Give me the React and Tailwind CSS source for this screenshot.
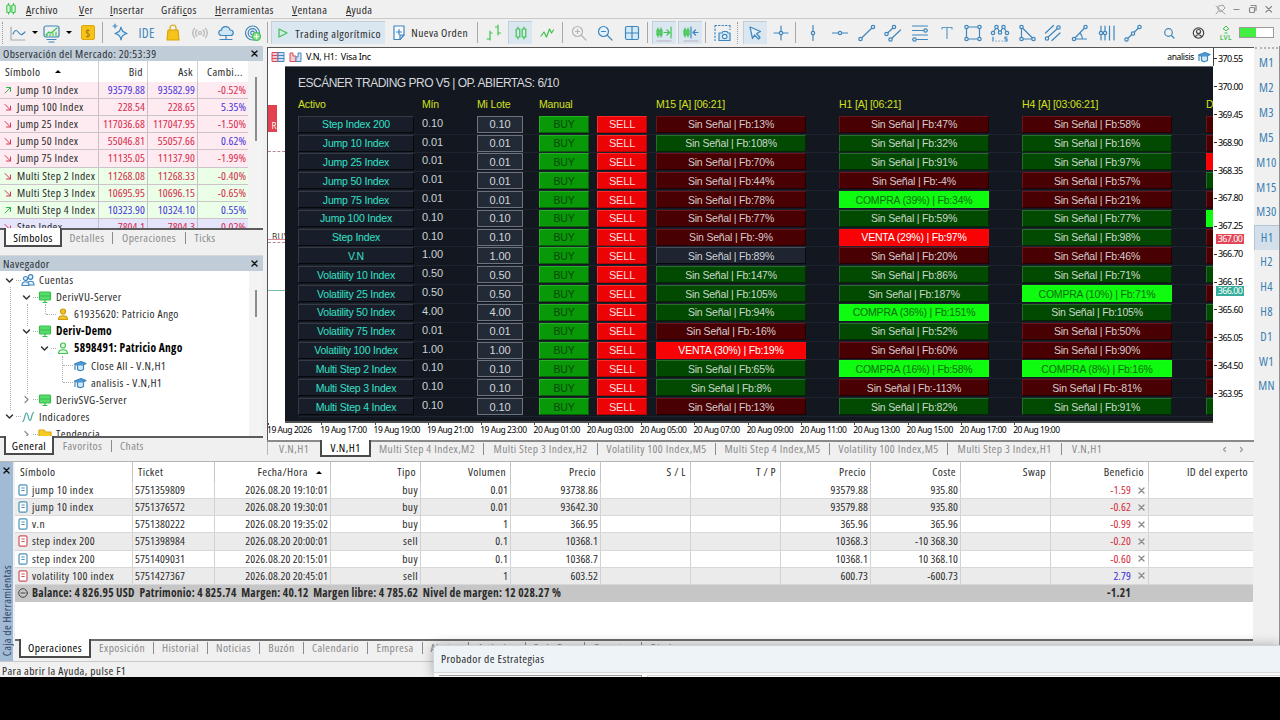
import clsx from "clsx";

const BLUE = "#3f86bd";
const GREEN = "#3fc34f";

const MENU = [
    { label: "Archivo", width: "w-[53px]" },
    { label: "Ver", width: "w-[31px]" },
    { label: "Insertar", width: "w-[51px]" },
    { label: "Gráficos", width: "w-[54px]", key: 5 },
    { label: "Herramientas", width: "w-[77px]" },
    { label: "Ventana", width: "w-[54px]" },
    { label: "Ayuda", width: "w-[40px]" },
];

const QUOTES = [
    { name: "Jump 10 Index", bid: "93579.88", ask: "93582.99", change: "-0.52%", up: true, tone: "pink" },
    { name: "Jump 100 Index", bid: "228.54", ask: "228.65", change: "5.35%", up: false, tone: "pink" },
    { name: "Jump 25 Index", bid: "117036.68", ask: "117047.95", change: "-1.50%", up: false, tone: "pink" },
    { name: "Jump 50 Index", bid: "55046.81", ask: "55057.66", change: "0.62%", up: false, tone: "pink" },
    { name: "Jump 75 Index", bid: "11135.05", ask: "11137.90", change: "-1.99%", up: false, tone: "pink" },
    { name: "Multi Step 2 Index", bid: "11268.08", ask: "11268.33", change: "-0.40%", up: false, tone: "green" },
    { name: "Multi Step 3 Index", bid: "10695.95", ask: "10696.15", change: "-0.65%", up: false, tone: "green" },
    { name: "Multi Step 4 Index", bid: "10323.90", ask: "10324.10", change: "0.55%", up: true, tone: "green" },
    { name: "Step Index", bid: "7804.1", ask: "7804.3", change: "-0.02%", up: false, tone: "violet" },
];

const TONES = {
    pink: "bg-[#feebf1]",
    green: "bg-[#eafee8]",
    violet: "bg-[#e4e4fb]",
};

// signal kinds: r = bearish, g = bullish, n = neutral, B = buy alert, S = sell alert
const SCANNER = [
    ["Step Index 200", "0.10", "r13", "r47", "r58", "r"],
    ["Jump 10 Index", "0.01", "g108", "g32", "g16", "r"],
    ["Jump 25 Index", "0.01", "r70", "g91", "g97", "S"],
    ["Jump 50 Index", "0.01", "r44", "r-4", "r57", "g"],
    ["Jump 75 Index", "0.01", "r78", "B34:39", "r21", "r"],
    ["Jump 100 Index", "0.10", "r77", "g59", "g77", "B"],
    ["Step Index", "0.10", "r-9", "S97:29", "g98", "r"],
    ["V.N", "1.00", "n89", "r20", "r46", "r"],
    ["Volatility 10 Index", "0.50", "g147", "g86", "g71", "g"],
    ["Volatility 25 Index", "0.50", "g105", "g187", "B71:10", "r"],
    ["Volatility 50 Index", "4.00", "g94", "B151:36", "g105", "g"],
    ["Volatility 75 Index", "0.01", "r-16", "g52", "r50", "r"],
    ["Volatility 100 Index", "1.00", "S19:30", "r60", "r90", "r"],
    ["Multi Step 2 Index", "0.10", "g65", "B58:16", "B16:8", "r"],
    ["Multi Step 3 Index", "0.10", "g8", "r-113", "r-81", "r"],
    ["Multi Step 4 Index", "0.10", "r13", "g82", "g91", "g"],
];

const SIGNALS = {
    r: "bg-[#480003] border-t-[#6a1419] border-l-[#6a1419] border-b-[#230003] border-r-[#230003] text-[#d6cccd]",
    g: "bg-[#024a02] border-t-[#24702a] border-l-[#24702a] border-b-[#012801] border-r-[#012801] text-[#cbd8cb]",
    n: "bg-[#1e2430] border-t-[#454c58] border-l-[#454c58] border-b-[#07090e] border-r-[#07090e] text-[#cfd2d8]",
    B: "bg-[#0ffb0f] border-[#12fe12] text-[#0b6d0b]",
    S: "bg-[#f70205] border-[#fb0609] text-white",
};

const PRICES = ["370.55", "370.00", "369.45", "368.90", "368.35", "367.80", "367.25", "366.70", "366.15", "365.60", "365.05", "364.50", "363.95"];

const DATES = [
    "19 Aug 2026", "19 Aug 17:00", "19 Aug 19:00", "19 Aug 21:00", "19 Aug 23:00",
    "20 Aug 01:00", "20 Aug 03:00", "20 Aug 05:00", "20 Aug 07:00", "20 Aug 09:00",
    "20 Aug 11:00", "20 Aug 13:00", "20 Aug 15:00", "20 Aug 17:00", "20 Aug 19:00",
];

const FRAMES = ["M1", "M2", "M3", "M5", "M10", "M15", "M30", "H1", "H2", "H4", "H8", "D1", "W1", "MN"];

const CHART_TABS = [
    { label: "Multi Step 4 Index,M2", width: "w-[113px]" },
    { label: "Multi Step 3 Index,H2", width: "w-[114px]" },
    { label: "Volatility 100 Index,M5", width: "w-[118px]" },
    { label: "Multi Step 4 Index,M5", width: "w-[114px]" },
    { label: "Volatility 100 Index,M5", width: "w-[118px]" },
    { label: "Multi Step 3 Index,H1", width: "w-[114px]" },
    { label: "V.N,H1", width: "w-[50px]", last: true },
];

const BOTTOM_TABS = [
    { label: "Exposición", width: "w-[63px]" },
    { label: "Historial", width: "w-[54px]" },
    { label: "Noticias", width: "w-[52px]" },
    { label: "Buzón", width: "w-[44px]" },
    { label: "Calendario", width: "w-[64px]" },
    { label: "Empresa", width: "w-[55px]" },
    { label: "Alertas", width: "w-[46px]" },
    { label: "Artículos", width: "w-[57px]" },
    { label: "Code Base", width: "w-[59px]" },
    { label: "Expertos", width: "w-[57px]" },
    { label: "Diario", width: "w-[44px]", last: true },
];

const TRADES = [
    ["jump 10 index", "5751359809", "2026.08.20 19:10:01", "buy", "0.01", "93738.86", "93579.88", "935.80", "-1.59"],
    ["jump 10 index", "5751376572", "2026.08.20 19:30:01", "buy", "0.01", "93642.30", "93579.88", "935.80", "-0.62"],
    ["v.n", "5751380222", "2026.08.20 19:35:02", "buy", "1", "366.95", "365.96", "365.96", "-0.99"],
    ["step index 200", "5751398984", "2026.08.20 20:00:01", "sell", "0.1", "10368.1", "10368.3", "-10 368.30", "-0.20"],
    ["step index 200", "5751409031", "2026.08.20 20:15:01", "buy", "0.1", "10368.7", "10368.1", "10 368.10", "-0.60"],
    ["volatility 100 index", "5751427367", "2026.08.20 20:45:01", "sell", "1", "603.52", "600.73", "-600.73", "2.79"],
];

const TRADE_GRID = "grid grid-cols-[118px_82px_116px_90px_90px_90px_90px_90px_90px_90px_90px_98px_104px]";

function Icon({ children, color = BLUE, size = 24 }) {
    return (
        <svg
            width={size}
            height={size}
            viewBox={`0 0 ${size} ${size}`}
            fill="none"
            stroke={color}
            strokeWidth="1.2"
            strokeLinecap="round"
            strokeLinejoin="round"
            className="shrink-0"
        >
            {children}
        </svg>
    );
}

function Tool({ children, active, color }) {
    return (
        <div className="flex h-full w-[26.67px] shrink-0 items-center justify-center">
            <div className={clsx("flex h-[23px] w-[24px] items-center justify-center", active && "border-t border-l border-[#c2cfd9] bg-[#dae6f0]")}>
                <Icon color={color}>{children}</Icon>
            </div>
        </div>
    );
}

function Dot({ x, y }) {
    return <circle cx={x} cy={y} r="1.7" fill="#f0f0f0" />;
}

function Sep() {
    return <div className="h-[21px] w-px shrink-0 bg-[#a8a8a8]" />;
}

function Caret() {
    return (
        <div className="flex w-[10px] justify-center">
            <div className="border-x-3 border-t-3 border-x-transparent border-t-black" />
        </div>
    );
}

function Grip() {
    return <div className="h-[22px] border-l border-dotted border-[#9a9a9a]" />;
}

function MenuBar() {
    return (
        <div className="flex h-[19px] items-center border-b border-[#c9c9c9]">
            <div className="w-[26px]">
                <svg width="22" height="14" viewBox="0 0 22 14" fill="#d9f5dc" stroke={GREEN} strokeWidth="1.1">
                    <path d="M8.5 1v11.5M13.5 1v11.5" />
                    <rect x="6.8" y="3" width="3.4" height="7.5" rx="1" />
                    <rect x="11.8" y="3" width="3.4" height="7.5" rx="1" />
                </svg>
            </div>
            {MENU.map(({ label, width, key = 0 }) => (
                <div key={label} className={clsx("pt-px whitespace-nowrap", width)}>
                    {label.slice(0, key)}
                    <u className="decoration-1 underline-offset-1">{label[key]}</u>
                    {label.slice(key + 1)}
                </div>
            ))}
            <div className="mr-1 ml-auto flex gap-[1px]">
                <Icon size={15} color="#a0a0a0">
                    <path d="M3 4l9 8M5.500 9L3 12M6 4l4-1 2 3-2 2-3 2-2-3z" strokeWidth="1" />
                </Icon>
                <Icon size={15} color="#8a8a8a"><path d="M5 7.500h5" /></Icon>
                <Icon size={15} color="#8a8a8a">
                    <rect x="4.500" y="5.500" width="5" height="5" rx="1" />
                    <path d="M6 3.500h5v5" />
                </Icon>
                <Icon size={15} color="#8a8a8a"><path d="M5 4.500l5.500 5.500M10.500 4.500L5 10" /></Icon>
            </div>
        </div>
    );
}

function Toolbar() {
    return (
        <div className="flex h-[27px] items-center *:shrink-0">
            <div className="w-[6px] pl-[2px]"><Grip /></div>
            <Icon>
                <path d="M5 6v13h14" stroke="#aaa" />
                <path d="M7 13c2-5 4-4 6-1s4 1 6-1" />
            </Icon>
            <Caret />
            <Icon>
                <rect x="4" y="5" width="15" height="11" rx="2" />
                <path d="M7 18.500h9M9 21h5" />
                <path d="M6 14l3-3 2 1 6-5M7 15v-1M10 15v-2M13 15v-3M16 15v-4" stroke={GREEN} />
            </Icon>
            <Caret />
            <div className="flex w-[28px] justify-center">
                <div className="flex h-[15px] w-[14px] items-center justify-center rounded-[2px] border border-[#dfa60c] bg-[#f7c31a] text-[11px] font-semibold text-[#a87908]">$</div>
            </div>
            <Sep />
            <div className="w-[4px]" />
            <Tool>
                <path d="M13 6c.8 4 2 5.200 6 6.500-4 1.200-5.200 2.500-6 6.500-.8-4-2-5.300-6-6.500 4-1.300 5.200-2.500 6-6.500z" fill="#d9ebf8" />
                <path d="M7 3v4M5 5h4" />
            </Tool>
            <div className="w-[26px] text-center text-[13.5px] text-[#3f86bd]">IDE</div>
            <Tool color="#d9a40b">
                <path d="M9 10V7c0-4 6-4 6 0v3" />
                <path d="M7 9h10l1 10H6z" fill="#f7c31a" />
            </Tool>
            <Tool color="#b5b5b5">
                <circle cx="12" cy="12" r="1.500" />
                <path d="M9 9c-2 2-2 4 0 6M15 9c2 2 2 4 0 6M6.500 7.500c-2.500 3-2.500 6 0 9M17.500 7.500c2.500 3 2.500 6 0 9" />
            </Tool>
            <Tool>
                <path d="M8 14.500c-4 0-4.500-5-.5-5.300C8 4.500 15 4.500 16 9c4.500 0 4 5.500.5 5.500z" fill="#cfe6f7" />
                <path d="M12 14.500v4M6 18.500h12" />
            </Tool>
            <Tool>
                <circle cx="11.500" cy="12" r="7" />
                <circle cx="11.500" cy="12" r="4.300" />
                <circle cx="11.500" cy="12" r="1.800" />
                <circle cx="15.500" cy="15.500" r="4" fill="#8ce08c" stroke={GREEN} />
                <path d="M15.500 13.700v3.600M13.700 15.500h3.600" stroke="#fff" />
            </Tool>
            <div className="w-[1px]" />
            <Sep />
            <div className="ml-[3px] flex h-[23px] w-[114px] items-center border-t border-l border-[#c2cfd9] bg-[#dae6f0]">
                <Icon size={22} color={GREEN}><path d="M7 7l8 4-8 4z" /></Icon>
                <span className="ml-px pt-px tracking-[0.5px] whitespace-nowrap">Trading algorítmico</span>
            </div>
            <div className="flex w-[92px] items-center pl-[2px]">
                <Icon>
                    <path d="M7 5h10v9l-4 4.500H7z" fill="#f8fcff" />
                    <path d="M12 8.500v5M9.500 11h5M13 18.500v-4.300h4" />
                </Icon>
                <span className="whitespace-nowrap">Nueva Orden</span>
            </div>
            <Sep />
            <div className="w-[2px]" />
            <Tool color={GREEN}><path d="M8 10v9M5 18h3M8 12h2M16 4v10M13.500 6H16M16 12h2.500" /></Tool>
            <Tool active color={GREEN}>
                <path d="M9 6v12M15 6v12" />
                <rect x="7.200" y="8" width="3.600" height="8" fill="#dae6f0" />
                <rect x="13.200" y="8" width="3.600" height="8" fill="#dae6f0" />
            </Tool>
            <Tool color={GREEN}><path d="M6 15l3-4 2.500 5 3-8 2 4 2-3" /></Tool>
            <div className="w-[2px]" />
            <Sep />
            <div className="w-[2px]" />
            <Tool color="#b5b5b5">
                <circle cx="10.500" cy="10.500" r="5" />
                <path d="M14.500 14.500l4.500 4.500M8.500 10.500h4M10.500 8.500v4" />
            </Tool>
            <Tool>
                <circle cx="10.500" cy="10.500" r="5" fill="#e4f1fb" />
                <path d="M14.500 14.500l4.500 4.500M8.500 10.500h4" />
            </Tool>
            <Tool>
                <rect x="5.500" y="5.500" width="13" height="13" rx="1.500" fill="#d5eaf9" />
                <path d="M12 5.500v13M5.500 12h13" />
            </Tool>
            <div className="w-[2px]" />
            <Sep />
            <div className="w-[2px]" />
            <Tool active color={GREEN}>
                <path d="M6 7v9M9 7v9" />
                <rect x="5" y="9" width="2" height="5" />
                <rect x="8" y="9" width="2" height="5" />
                <path d="M12 11.500h5M15 9l2.500 2.500L15 14M19 6v11" />
                <path d="M5 20h14" stroke="#bbaec0" />
            </Tool>
            <Tool active color={GREEN}>
                <path d="M6 7v9M9 7v9" />
                <rect x="5" y="9" width="2" height="5" />
                <rect x="8" y="9" width="2" height="5" />
                <path d="M12 6v11M19 11.500h-5M16.500 9L14 11.500l2.500 2.500" stroke={BLUE} />
                <path d="M5 20h14" stroke="#bbaec0" />
            </Tool>
            <div className="w-[1px]" />
            <Sep />
            <div className="w-[3px]" />
            <Tool>
                <path d="M5 4.500h15M5 4.500v15M20 4.500v4" strokeDasharray="1.500 2" />
                <path d="M9 12h3l1-1.500h4l1 1.500h2v7.500H9z" fill="#d5eaf9" />
                <circle cx="14.700" cy="15.500" r="2.200" fill="#fff" />
            </Tool>
            <div className="w-[6px] pl-[2px]"><Grip /></div>
            <Tool active><path d="M7 6l10.500 4.500-4 2 3.500 4-1.500 1.500-4-4-2 3.500z" fill="#e6f2fb" /></Tool>
            <Tool>
                <path d="M12 5v14M5 12h14" />
                <Dot x="12" y="12" />
            </Tool>
            <Sep />
            <div className="w-[4.5px]" />
            <Tool>
                <path d="M12 4.500v15" />
                <Dot x="12" y="12" />
            </Tool>
            <Tool>
                <path d="M4.500 12h15" />
                <Dot x="12" y="12" />
            </Tool>
            <Tool>
                <path d="M5 18.500L18.500 5.500" />
                <Dot x="5.500" y="18" />
                <Dot x="18" y="6" />
            </Tool>
            <Tool>
                <path d="M5.500 13l7.500-7M9.500 18.500l10-9.500" />
                <Dot x="5.500" y="13" />
                <Dot x="13" y="6" />
                <Dot x="9.500" y="18.500" />
            </Tool>
            <Tool>
                <path d="M4.500 5h15M4.500 9.500h15M4.500 14h15M4.500 18.500h15" />
                <Dot x="17.500" y="9.500" />
                <Dot x="6.500" y="18.500" />
            </Tool>
            <Tool><path d="M7 8V6.500h10V8M12 6.500v11" stroke="#5f9bc8" /></Tool>
            <Tool>
                <rect x="5.500" y="6" width="13" height="12" />
                <Dot x="5.500" y="6" />
                <Dot x="18.500" y="6" />
                <Dot x="5.500" y="18" />
                <Dot x="18.500" y="18" />
            </Tool>
            <Tool>
                <path d="M5 12l3.500-6 3.500 5 3.500-5 3.500 6" />
                <Dot x="5" y="12" />
                <Dot x="8.500" y="6" />
                <Dot x="12" y="11.500" />
                <Dot x="15.500" y="6" />
                <Dot x="19" y="12" />
                <path d="M5 16v4M8 20h.2M11 20h.2M14 20h.2M19 16h-2v1.800h2V20h-2.200" />
            </Tool>
            <Tool>
                <path d="M6.500 6v12h12z" />
                <Dot x="6.500" y="6" />
                <Dot x="6.500" y="18" />
                <Dot x="18.500" y="18" />
            </Tool>
            <Tool>
                <path d="M4.500 12l8-7.500M6 17L17 7M11 19.500l8-7.500" />
                <Dot x="6" y="17.500" />
                <Dot x="17.500" y="6.500" />
            </Tool>
            <Tool>
                <path d="M17.500 6L6 18h12.500M12 12c2 2 2.500 4 2.500 6" />
                <Dot x="17.500" y="6" />
                <Dot x="6" y="18" />
            </Tool>
            <Tool>
                <path d="M6 5v14M10 5v14M14.500 5v14M19 5v14" />
                <Dot x="6" y="12" />
                <Dot x="10" y="12" />
            </Tool>
            <Tool>
                <path d="M5.500 18.500l6.500-6L18.500 6" />
                <Dot x="5.500" y="18.500" />
                <Dot x="12" y="12.500" />
                <Dot x="18.500" y="6" />
            </Tool>
            <div className="w-[9px]" />
            <Tool>
                <circle cx="11.500" cy="11.500" r="3.800" />
                <path d="M14.500 14.500l2.500 2.500" />
            </Tool>
            <div className="w-[3px]" />
            <Tool color="#444">
                <circle cx="11.500" cy="12" r="5.200" />
                <circle cx="11.500" cy="10.500" r="2" />
                <path d="M8.500 16c.5-3 5.500-3 6 0" />
            </Tool>
            <div className="mr-[-1px] flex w-[28px] flex-col items-center font-['Noto_Sans'] text-[6.5px] leading-[7px] font-semibold text-[#3fc34f]">
                <svg width="8" height="9" viewBox="0 0 8 9" fill="none" stroke={GREEN}>
                    <path d="M2 4H1l3-3 3 3H6L4 6z" />
                    <path d="M2.500 8h3" />
                </svg>
                LVL
            </div>
            <div className="h-[11px] w-[35px] border border-[#9b9b9b] bg-white">
                <div className="h-full w-1/2 bg-[#44ef44]" />
            </div>
        </div>
    );
}

function PanelHeader({ title }) {
    return (
        <div className="flex h-[15px] shrink-0 items-center justify-between bg-[#c0ccd7] pr-1 pl-[3px] text-[#2a3036]">
            {title}
            <Icon size={9} color="#111"><path d="M2 2l5 5M7 2L2 7" strokeWidth="1.400" /></Icon>
        </div>
    );
}

function Arrow({ up }) {
    return (
        <Icon size={10} color={up ? "#2fb84a" : "#d9354f"}>
            {up ? <path d="M2 8l5.500-5.500M3.500 2.500h4v4" strokeWidth="1" /> : <path d="M2 2.500L7.500 8M7.500 4v4h-4" strokeWidth="1" />}
        </Icon>
    );
}

function MarketWatch() {
    const cell = "flex items-center justify-end border-r border-[#c5c0c6] pr-[2px]";
    const head = "flex items-center justify-end border-r border-[#d0d0d0] pr-[4px]";
    const tint = (value) => (value ? "text-[#4634dc]" : "text-[#d62b4b]");
    return (
        <div className="flex h-[209px] shrink-0 flex-col">
            <PanelHeader title="Observación del Mercado: 20:53:39" />
            <div className="flex h-[169px] overflow-hidden border-b-2 border-[#5c5c5c] bg-white">
                <div className="w-[248px]">
                    <div className="grid h-[21px] grid-cols-[99px_49px_50px_50px]">
                        <div className={clsx(head, "justify-start! gap-[15px] pl-[5px]")}>
                            Símbolo
                            <span className="border-x-3 border-b-3 border-x-transparent border-b-black" />
                        </div>
                        <div className={head}>Bid</div>
                        <div className={head}>Ask</div>
                        <div className="flex items-center justify-end pr-[5px]">Cambi...</div>
                    </div>
                    {QUOTES.map((q) => (
                        <div key={q.name} className={clsx("grid h-[17.12px] grid-cols-[99px_49px_50px_50px] border-b border-[#ccc4ca]", TONES[q.tone])}>
                            <div className={clsx(cell, "justify-start! gap-[4px] pl-[3px] tracking-[0.35px] whitespace-nowrap")}>
                                <Arrow up={q.up} />
                                {q.name}
                            </div>
                            <div className={clsx(cell, "tracking-[0.05px]", tint(q.up))}>{q.bid}</div>
                            <div className={clsx(cell, "tracking-[0.05px]", tint(q.up))}>{q.ask}</div>
                            <div className={clsx(cell, "border-r-0! tracking-[0.05px]", tint(q.change[0] !== "-"))}>{q.change}</div>
                        </div>
                    ))}
                </div>
                <div className="flex w-[15px] justify-center bg-[#f3f3f3] pt-[16px]">
                    <div className="h-[64px] w-[2px] bg-[#8d8d8d]" />
                </div>
            </div>
            <SideTabs active="Símbolos" activeWidth="w-[58px]" tabs={[["Detalles", "w-[50px]"], ["Operaciones", "w-[72px]"], ["Ticks", "w-[38px]"]]} />
        </div>
    );
}

function SideTabs({ active, activeWidth, tabs }) {
    return (
        <div className="flex h-[18px] pl-[4px] text-[#8b8b8b]">
            <div className={clsx("-mt-[2px] flex h-[19px] items-center justify-center border-2 border-t-0 border-[#4a4a4a] bg-white pt-[3px] text-black", activeWidth)}>{active}</div>
            {tabs.map(([label, width], i) => (
                <div key={label} className="flex h-[16px] items-center">
                    {i > 0 && <div className="h-[12px] w-px bg-[#8b8b8b]" />}
                    <div className={clsx("text-center whitespace-nowrap", width)}>{label}</div>
                </div>
            ))}
        </div>
    );
}

function Chevron({ open }) {
    return (
        <Icon size={11} color={open ? "#333" : "#888"}>
            {open ? <path d="M2.500 4l3 3 3-3" strokeWidth="1.500" /> : <path d="M4 2.500l3 3-3 3" />}
        </Icon>
    );
}

function PersonIcon({ gold }) {
    return (
        <Icon size={14} color={gold ? "#cf9a0a" : GREEN}>
            <circle cx="7" cy="4.500" r="2.500" fill={gold ? "#f5c32c" : "#dff8e2"} />
            <path d="M2.500 12.500c0-5 9-5 9 0z" fill={gold ? "#f5c32c" : "#dff8e2"} />
        </Icon>
    );
}

function ServerIcon() {
    return (
        <Icon size={14} color="#35bd4b">
            <rect x="1.500" y="2" width="11" height="8" rx="1" fill="#58dc6c" />
            <path d="M2 6h10M5 12.500h4M7 10v2" />
        </Icon>
    );
}

function CapIcon() {
    return (
        <Icon size={14}>
            <path d="M1.500 5L8 2.500 13 4.500 7.500 7.500z" fill="#4d9ad3" />
            <path d="M4.500 6.500v4c2 1.500 4 1.300 6 0v-4" fill="#d5eaf9" />
            <path d="M2 5.500v5" />
        </Icon>
    );
}

const TREE = [
    { pad: "pl-[4px]", open: true, label: "Cuentas", icon: "users" },
    { pad: "pl-[21px]", open: true, label: "DerivVU-Server", icon: "server" },
    { pad: "pl-[39px]", leaf: true, label: "61935620: Patricio Ango", icon: "gold" },
    { pad: "pl-[21px]", open: true, label: "Deriv-Demo", icon: "server", bold: true },
    { pad: "pl-[39px]", open: true, label: "5898491: Patricio Ango", icon: "person", bold: true },
    { pad: "pl-[56px]", leaf: true, label: "Close All - V.N,H1", icon: "cap" },
    { pad: "pl-[56px]", leaf: true, label: "analisis - V.N,H1", icon: "cap" },
    { pad: "pl-[21px]", open: false, label: "DerivSVG-Server", icon: "server" },
    { pad: "pl-[4px]", open: true, label: "Indicadores", icon: "wave" },
    { pad: "pl-[21px]", open: false, label: "Tendencia", icon: "folder" },
];

const TREE_ICONS = {
    users: (
        <Icon size={14}>
            <circle cx="9.500" cy="4" r="2.300" fill="#e4f1fb" />
            <path d="M6 12c0-5 7-5 7 0z" fill="#e4f1fb" />
            <circle cx="4.500" cy="5.500" r="2" fill="#e4f1fb" />
            <path d="M1 12.500c0-5 7-5 7 0z" fill="#e4f1fb" />
        </Icon>
    ),
    server: <ServerIcon />,
    gold: <PersonIcon gold />,
    person: <PersonIcon />,
    cap: <CapIcon />,
    wave: (
        <Icon size={14} color="#4aa9a0">
            <path d="M1.500 11.500C4 11 3.500 3 5.500 3S7 10.500 9 10.500 10 4 12.500 2.500" />
        </Icon>
    ),
    folder: (
        <Icon size={14} color="#dba90f">
            <path d="M1 3h5l1.500 2H13v8H1z" fill="#f7cb26" />
        </Icon>
    ),
};

function Navigator() {
    return (
        <div className="flex flex-col border-t border-[#d6d6d6]">
            <PanelHeader title="Navegador" />
            <div className="flex h-[167px] overflow-hidden border-b-2 border-[#5c5c5c] bg-white">
                <div className="relative w-[249px] pt-[0.5px]">
                    {/* guide lines between levels */}
                    <div className="absolute top-[16px] left-[10px] h-[125px] border-l border-dotted border-[#b0b0b0]" />
                    <div className="absolute top-[33px] left-[27px] h-[90px] border-l border-dotted border-[#b0b0b0]" />
                    <div className="absolute top-[33px] left-[45px] h-[10px] border-l border-dotted border-[#b0b0b0]" />
                    <div className="absolute top-[85px] left-[62px] h-[26px] border-l border-dotted border-[#b0b0b0]" />
                    {TREE.map((node) => (
                        <div key={node.label} className={clsx("relative flex h-[17.12px] items-center whitespace-nowrap", node.pad, node.bold && "font-bold tracking-[0.3px] text-black")}>
                            {node.leaf ? (
                                <span className="ml-[7px] w-[10px] border-t border-dotted border-[#b0b0b0]" />
                            ) : (
                                <>
                                    <span className="bg-white"><Chevron open={node.open} /></span>
                                    <span className="ml-px w-[5px] border-t border-dotted border-[#b0b0b0]" />
                                </>
                            )}
                            <span className="mr-[4px]">{TREE_ICONS[node.icon]}</span>
                            {node.label}
                        </div>
                    ))}
                </div>
                <div className="flex w-[14px] justify-center bg-[#f3f3f3] pt-[19px]">
                    <div className="h-[27px] w-[2px] bg-[#8d8d8d]" />
                </div>
            </div>
            <SideTabs active="General" activeWidth="w-[50px]" tabs={[["Favoritos", "w-[57px]"], ["Chats", "w-[40px]"]]} />
        </div>
    );
}

function Signal({ code, clip }) {
    const kind = code[0];
    const [fb, pct] = code.slice(1).split(":");
    let text = "";
    if (!clip) {
        text = pct ? `${kind === "B" ? "COMPRA" : "VENTA"} (${pct}%) | Fb:${fb}%` : `Sin Señal | Fb:${fb}%`;
    }
    return (
        <div className={clsx("flex h-[17px] items-center justify-center border whitespace-nowrap", SIGNALS[kind], clip ? "w-[8px]" : "w-[150px]")}>
            {text}
        </div>
    );
}

function Scanner() {
    const columns = "grid grid-cols-[124px_55px_62px_58px_59px_183px_183px_184px_8px]";
    return (
        <div className="h-[357px] w-[928px] overflow-hidden border-t border-b-2 border-t-[#6d737c] border-b-[#555] bg-[#131820] pl-[13px] font-['Liberation_Sans',sans-serif] text-[10.5px] tracking-[-0.2px]">
            <div className="flex h-[32px] items-center text-[12px] tracking-[-0.5px] whitespace-nowrap text-[#d4d7dc]">ESCÁNER TRADING PRO V5 | OP. ABIERTAS: 6/10</div>
            <div className={clsx(columns, "h-[16.7px] items-start leading-[11px] tracking-[-0.15px] text-[#d3e01c]")}>
                <span>Activo</span>
                <span>Mín</span>
                <span>Mi Lote</span>
                <span>Manual</span>
                <span />
                <span>M15 [A] [06:21]</span>
                <span>H1 [A] [06:21]</span>
                <span>H4 [A] [03:06:21]</span>
                <span>D</span>
            </div>
            {SCANNER.map(([name, lot, m15, h1, h4, d1]) => (
                <div key={name} className={clsx(columns, "h-[18.83px] border-b border-[#1d242e]")}>
                    <div className="flex h-[17px] w-[116px] items-center justify-center border border-t-[#343b46] border-r-[#05070b] border-b-[#05070b] border-l-[#343b46] bg-[#171e29] text-[#35e0c8]">{name}</div>
                    <div className="text-[11px] leading-[14px] tracking-[-0.1px] text-[#cdd0d5]">{lot}</div>
                    <div className="flex h-[17px] w-[46px] items-center justify-center border border-[#6c737e] bg-[#222a36] text-[11px] tracking-[-0.1px] text-[#d3d6db]">{lot}</div>
                    <div className="flex h-[17px] w-[50px] items-center justify-center border border-t-[#27b027] border-r-[#056105] border-b-[#056105] border-l-[#27b027] bg-[#089808] text-[#064a06]">BUY</div>
                    <div className="flex h-[17px] w-[50px] items-center justify-center border border-t-[#ff2a2a] border-r-[#b80003] border-b-[#b80003] border-l-[#ff2a2a] bg-[#ec0306] text-[11px] text-[#ffdcdc]">SELL</div>
                    <Signal code={m15} />
                    <Signal code={h1} />
                    <Signal code={h4} />
                    <Signal code={d1} clip />
                </div>
            ))}
        </div>
    );
}

function Chart() {
    return (
        <div className="flex h-[393px] border-t border-l border-[#555] bg-white font-['Noto_Sans',sans-serif] text-[9px] text-black">
            <div className="w-[946px]">
                <div className="flex h-[18px] items-center border-r border-[#444] pr-[2px] pl-[3px] tracking-[-0.3px]">
                    <svg width="32" height="12" viewBox="0 0 32 12" fill="#fff" strokeWidth="1">
                        <path d="M1 1.500h6v9H1zM1 4.500h6M1 7.500h6" fill="#f7c9cf" stroke="#d84a5c" />
                        <path d="M7 1.500h6v9H7zM7 4.500h6M7 7.500h6" fill="#cfe2f3" stroke="#4a86c0" />
                        <path d="M19 2h3v3h3v5.500h-6z" fill="#f7c9cf" stroke="#d84a5c" />
                        <path d="M25 10.500V6h2V2h3v8.500z" fill="#cfe2f3" stroke="#4a86c0" />
                    </svg>
                    <span className="ml-[3px] tracking-[-0.3px] whitespace-pre">V.N, H1:  Visa Inc</span>
                    <span className="mr-[3px] ml-auto text-[8.500px] tracking-[-0.35px]">analisis</span>
                    <CapIcon />
                </div>
                <div className="flex">
                    <div className="relative h-[357px] w-[17px] overflow-hidden">
                        <div className="mt-[39px] flex h-[27px] w-[9px] items-end justify-end overflow-hidden bg-[#e2414f] text-[8px] leading-[12px] text-white">R</div>
                        <div className="absolute top-[85px] h-px w-full border-t border-dashed border-[#b08a90]" />
                        <div className="absolute top-[166px] left-[4px] text-[8px] leading-[10px] whitespace-nowrap text-[#333]">BUY</div>
                        <div className="absolute top-[173px] h-px w-full bg-[#dd8c95]" />
                        <div className="absolute top-[176px] h-px w-full border-t border-dashed border-[#b08a90]" />
                        <div className="absolute top-[224px] h-px w-full bg-[#76beb2]" />
                    </div>
                    <Scanner />
                </div>
                <div className="flex h-[17px]">
                    {DATES.map((date) => (
                        <div key={date} className="w-[53.3px] shrink-0 tracking-[-0.45px] whitespace-nowrap">
                            <div className="h-[2px] w-px bg-[#444]" />
                            <div className="-ml-px text-[8.500px] leading-[10px]">{date}</div>
                        </div>
                    ))}
                </div>
            </div>
            <div className="relative w-[40px]">
                <div className="-mt-[3px]">
                    {PRICES.map((price) => (
                        <div key={price} className="flex h-[27.9px] items-center tracking-[-0.6px]">
                            <span className="mr-[1px] w-[3px] border-t border-[#333]" />
                            {price}
                        </div>
                    ))}
                </div>
                <div className="absolute top-[186px] left-[2px] h-[10px] w-[28px] bg-[#e24656] text-center leading-[10px] tracking-[-0.6px] text-white">367.00</div>
                <div className="absolute top-[238px] left-[2px] h-[10px] w-[28px] bg-[#36ac9a] text-center leading-[10px] tracking-[-0.6px] text-white">366.00</div>
            </div>
        </div>
    );
}

function ChartTabs() {
    return (
        <div className="flex h-[21px] border-t-2 border-[#8a8a8a] text-[#8b8b8b]">
            <div className="flex h-[13px] w-[53px] items-center justify-center border-l border-[#b5b5b5]">V.N,H1</div>
            <div className="-mt-[2px] flex h-[17px] w-[51px] items-center justify-center border-2 border-t-0 border-[#4a4a4a] bg-white text-black">V.N,H1</div>
            {CHART_TABS.map(({ label, width, last }, i) => (
                <div key={i} className={clsx("flex h-[13px] items-center", width)}>
                    <span className="grow text-center whitespace-nowrap">{label}</span>
                    {!last && <span className="h-[12px] w-px bg-[#8b8b8b]" />}
                </div>
            ))}
            <div className="mr-[7px] ml-auto flex h-[14px] items-center gap-[6px]">
                <Icon size={11} color="#999"><path d="M6.500 3.500l-2 2 2 2" /></Icon>
                <Icon size={11} color="#999"><path d="M4.500 3.500l2 2-2 2" /></Icon>
            </div>
        </div>
    );
}

function TimeFrames() {
    return (
        <div className="flex w-[26px] shrink-0 flex-col border-r border-[#8f8f8f] text-[12.5px] tracking-[0.3px] text-[#3b7fb0]">
            <div className="mx-px mt-px h-[4px] border-t-2 border-dotted border-[#b5b5b5]" />
            {FRAMES.map((frame) => (
                <div key={frame} className={clsx("flex h-[24.85px] items-center justify-center", frame === "H1" && "border-t border-l border-[#b3c4d3] bg-[#d3e0ec]")}>
                    {frame}
                </div>
            ))}
        </div>
    );
}

function DocIcon({ sell }) {
    return (
        <Icon size={12} color={sell ? "#cf5560" : "#4b92b8"}>
            <rect x="2" y="0.800" width="8" height="10.400" rx="1.500" fill="#fff" />
            <path d="M4.800 4h2.500M4.800 6.500h2.500" strokeWidth="1" />
        </Icon>
    );
}

function TradeTable() {
    const head = "flex items-center justify-end border-r border-[#c4c4c4] pr-[4px]";
    const cell = "flex items-center justify-end border-r border-[#d2d2d2] pr-[2px]";
    return (
        <div className="flex h-[179px] w-[1238px] flex-col border-b-2 border-[#6b6b6b] bg-white">
            <div className={clsx(TRADE_GRID, "h-[20px] shrink-0")}>
                <div className={clsx(head, "justify-start! pl-[5px]")}>Símbolo</div>
                <div className={clsx(head, "justify-start! pl-[5px]")}>Ticket</div>
                <div className={clsx(head, "gap-[8px] pr-[8px]!")}>
                    Fecha/Hora
                    <span className="border-x-3 border-b-3 border-x-transparent border-b-black" />
                </div>
                {["Tipo", "Volumen", "Precio", "S / L", "T / P", "Precio", "Coste", "Swap", "Beneficio"].map((label, i) => (
                    <div key={i} className={head}>{label}</div>
                ))}
                <div className="flex items-center justify-end pr-[5px]">ID del experto</div>
            </div>
            {TRADES.map(([name, ticket, time, type, volume, open, price, cost, profit], i) => (
                <div key={ticket} className={clsx(TRADE_GRID, "h-[17.15px] shrink-0 border-b border-[#d8d8d8] tracking-[0.1px]", i % 2 === 1 && "bg-[#ebebeb]")}>
                    <div className={clsx(cell, "justify-start! gap-[3px] pl-[2px] tracking-[0.4px]")}>
                        <DocIcon sell={type === "sell"} />
                        {name}
                    </div>
                    <div className={clsx(cell, "justify-start! pl-[2px]")}>{ticket}</div>
                    <div className={cell}>{time}</div>
                    <div className={clsx(cell, "tracking-[0.4px]")}>{type}</div>
                    <div className={cell}>{volume}</div>
                    <div className={cell}>{open}</div>
                    <div className={cell} />
                    <div className={cell} />
                    <div className={cell}>{price}</div>
                    <div className={cell}>{cost}</div>
                    <div className={cell} />
                    <div className={clsx(cell, "gap-[6px]", profit[0] === "-" ? "text-[#d62b3b]" : "text-[#3a2bd8]")}>
                        {profit}
                        <Icon size={9} color="#8a8a8a"><path d="M2 2l5 5M7 2L2 7" strokeWidth="1.300" /></Icon>
                    </div>
                    <div />
                </div>
            ))}
            <div className="flex h-[17px] shrink-0 items-center bg-[#c6c6c6] pl-[2px] font-bold tracking-[0.25px] whitespace-pre">
                <Icon size={12} color="#444">
                    <circle cx="6" cy="6" r="4.300" strokeWidth="1" />
                    <path d="M4 6h4" strokeWidth="1" />
                </Icon>
                <span className="ml-[3px]">Balance: 4 826.95 USD  Patrimonio: 4 825.74  Margen: 40.12  Margen libre: 4 785.62  Nivel de margen: 12 028.27 %</span>
                <span className="mr-[122px] ml-auto">-1.21</span>
            </div>
        </div>
    );
}

function Toolbox() {
    return (
        <div className="flex h-[200px] border-t border-[#b5b5b5]">
            <div className="flex w-[13px] shrink-0 flex-col items-center justify-between bg-[#a1bad5] pt-[4px] pb-[5px]">
                <Icon size={9} color="#111"><path d="M2 2l5 5M7 2L2 7" strokeWidth="1.400" /></Icon>
                <span className="rotate-180 leading-[13px] tracking-[0.3px] whitespace-nowrap text-[#33475e] [writing-mode:vertical-rl]">Caja de Herramientas</span>
            </div>
            <div className="ml-[2px]">
                <TradeTable />
                <div className="flex h-[18px] pl-[4px] text-[#8b8b8b]">
                    <div className="-mt-[2px] flex h-[19px] w-[72px] items-center justify-center border-2 border-t-0 border-[#4a4a4a] bg-white text-black">Operaciones</div>
                    {BOTTOM_TABS.map(({ label, width, last }) => (
                        <div key={label} className={clsx("flex h-[14px] items-center", width)}>
                            <span className="grow text-center whitespace-nowrap">{label}</span>
                            {!last && <span className="h-[12px] w-px bg-[#8b8b8b]" />}
                        </div>
                    ))}
                </div>
            </div>
        </div>
    );
}

export default function App() {
    return (
        <div className="relative h-[720px] w-[1280px] overflow-hidden bg-black font-['Open_Sans','Noto_Sans',sans-serif] text-[11.5px] leading-[16px] tracking-[0.4px] text-[#2b2b2b] font-stretch-condensed">
            <div className="flex h-[677px] flex-col bg-[#f0f0f0]">
                <MenuBar />
                <Toolbar />
                <div className="flex h-[615px]">
                    <div className="w-[1254px]">
                        <div className="flex h-[415px]">
                            <div className="w-[263px] shrink-0">
                                <MarketWatch />
                                <Navigator />
                            </div>
                            <div className="ml-[4px] w-[987px] pt-px">
                                <Chart />
                                <ChartTabs />
                            </div>
                        </div>
                        <Toolbox />
                    </div>
                    <TimeFrames />
                </div>
                <div className="flex h-[16px] items-center border-t border-[#c8c8c8] pt-[3px] pl-[2px]">Para abrir la Ayuda, pulse F1</div>
            </div>

            {/* strategy tester window peeking over the status bar */}
            <div className="absolute top-[645px] left-[433px] h-[32px] w-[847px] overflow-hidden rounded-tl-[5px] border-t border-l border-[#cfd4d8] bg-[#eef3f8] shadow-[0_0_12px_rgba(0,0,0,0.3)]">
                <div className="flex h-[27px] items-center border-b border-[#d4d8dc] pl-[7px]">Probador de Estrategias</div>
                <div className="flex h-[5px] bg-[#fafafa]">
                    <div className="mt-[2px] ml-[5px] h-[3px] w-[203px] border-t border-r border-[#9a9a9a]" />
                    <div className="mt-[2px] ml-[5px] grow border-t border-l border-[#d5d5d5]" />
                </div>
            </div>
        </div>
    );
}
